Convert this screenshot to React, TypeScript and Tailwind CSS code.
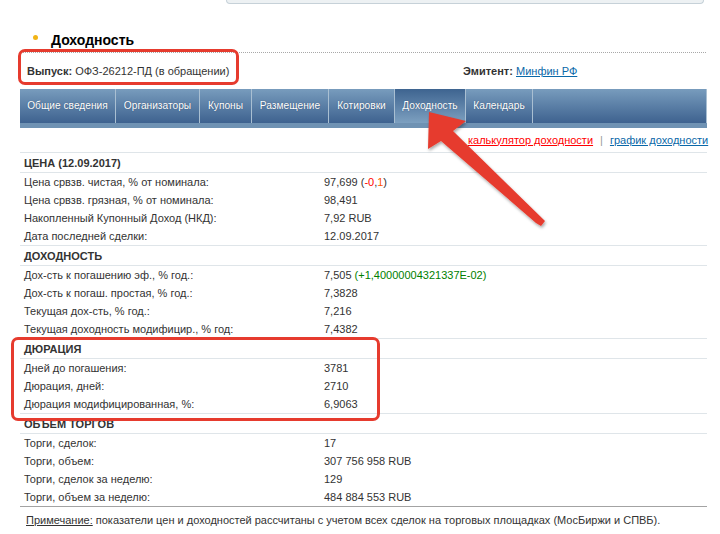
import React from "react";

const tabs: { label: string; w: string; active?: boolean }[] = [
  { label: "Общие сведения", w: "w-[96px]" },
  { label: "Организаторы", w: "w-[84px]" },
  { label: "Купоны", w: "w-[52px]" },
  { label: "Размещение", w: "w-[77px]" },
  { label: "Котировки", w: "w-[66px]" },
  { label: "Доходность", w: "w-[71px]", active: true },
  { label: "Календарь", w: "w-[67px]" },
];

type Row = [string, React.ReactNode];

const sections: { title: string; rows: Row[] }[] = [
  {
    title: "ЦЕНА (12.09.2017)",
    rows: [
      [
        "Цена срвзв. чистая, % от номинала:",
        <>
          97,699 (<span className="text-[#ff0000]">-0</span>,
          <span className="text-[#ff5500]">1</span>)
        </>,
      ],
      ["Цена срвзв. грязная, % от номинала:", "98,491"],
      ["Накопленный Купонный Доход (НКД):", "7,92 RUB"],
      ["Дата последней сделки:", "12.09.2017"],
    ],
  },
  {
    title: "ДОХОДНОСТЬ",
    rows: [
      [
        "Дох-сть к погашению эф., % год.:",
        <>
          7,505 <span className="text-[#008000]">(+1,40000004321337E-02)</span>
        </>,
      ],
      ["Дох-сть к погаш. простая, % год.:", "7,3828"],
      ["Текущая дох-сть, % год.:", "7,216"],
      ["Текущая доходность модифицир., % год:", "7,4382"],
    ],
  },
  {
    title: "ДЮРАЦИЯ",
    rows: [
      ["Дней до погашения:", "3781"],
      ["Дюрация, дней:", "2710"],
      ["Дюрация модифицированная, %:", "6,9063"],
    ],
  },
  {
    title: "ОБЪЕМ ТОРГОВ",
    rows: [
      ["Торги, сделок:", "17"],
      ["Торги, объем:", "307 756 958 RUB"],
      ["Торги, сделок за неделю:", "129"],
      ["Торги, объем за неделю:", "484 884 553 RUB"],
    ],
  },
];

export default function App() {
  return (
    <div
      className="relative w-[720px] h-[534px] overflow-hidden bg-white text-[#333] text-[11px]"
      style={{ fontFamily: '"Liberation Sans", Arial, sans-serif' }}
    >
      {/* top box remnant */}
      <div className="h-[4px] ml-[226px] w-[478px] border border-t-0 border-[#c6d1d8] bg-[#edf1f3] rounded-b-[4px]" />

      {/* title */}
      <div className="mt-[27px] ml-[33px] flex items-center h-[18px]">
        <span className="w-[5px] h-[5px] rounded-full bg-[#f2b416] mb-[6px]" />
        <span className="ml-[13px] text-[14px] font-bold text-black leading-[18px]">Доходность</span>
      </div>
      <div className="mt-[3px] ml-[20px] w-[686px] border-t border-dotted border-[#a8a8a8]" />

      {/* issue row */}
      <div className="mt-[9px] h-[18px] flex items-center whitespace-nowrap">
        <div className="ml-[27px] w-[436px]">
          <b>Выпуск:</b> ОФЗ-26212-ПД (в обращении)
        </div>
        <div>
          <b>Эмитент:</b> <span className="text-[#0a68a8] underline">Минфин РФ</span>
        </div>
      </div>

      {/* tabs */}
      <div className="mt-[9px] ml-[20px] w-[687px]">
        <div className="flex h-[34px] bg-gradient-to-b from-[#789cbd] to-[#3e628f]">
          {tabs.map((t) => (
            <div
              key={t.label}
              className={`${t.w} shrink-0 flex items-center justify-center border-r border-[#a9bfd2] text-white text-[10.2px] whitespace-nowrap ${
                t.active ? "bg-gradient-to-b from-[#3e6490] to-[#7da0c0]" : ""
              }`}
              style={{ textShadow: "0 0 1px rgba(30,50,80,0.7)" }}
            >
              {t.label}
            </div>
          ))}
          <div className="flex-1 border-r border-[#a9bfd2]" />
        </div>
        <div className="h-[5px] bg-[#6f92b3]" />
      </div>

      {/* links */}
      <div className="h-[24px] flex items-center ml-[468px] whitespace-nowrap">
        <span className="text-[#ff0000] underline">калькулятор доходности</span>
        <span className="mx-[7px] text-[#999]">|</span>
        <span className="text-[#0a68a8] underline">график доходности</span>
      </div>

      {/* table */}
      <div className="ml-[20px] w-[687px] border-b border-[#a3a3a3]">
        {sections.map((s) => (
          <div key={s.title} className="border-t border-[#dfe5e9]">
            <div className="h-[20px] pt-[1px] flex items-center pl-[4px] font-bold border-b border-[#dfe5e9]">
              {s.title}
            </div>
            {s.rows.map(([l, v], i) => (
              <div key={i} className="h-[18px] pt-[1px] flex items-center whitespace-nowrap">
                <div className="w-[304px] pl-[4px]">{l}</div>
                <div>{v}</div>
              </div>
            ))}
          </div>
        ))}
      </div>

      {/* note */}
      <div className="mt-[4px] h-[18px] flex items-center ml-[26px] whitespace-nowrap">
        <span className="underline">Примечание:</span>
        <span>&nbsp;показатели цен и доходностей рассчитаны с учетом всех сделок на торговых площадках (МосБиржи и СПВБ).</span>
      </div>

      {/* annotations */}
      <div className="absolute left-[18px] top-[49px] w-[221px] h-[36px] border-[3px] border-[#e63b2e] rounded-[7px]" />
      <div className="absolute left-[11px] top-[337px] w-[369px] h-[84px] border-[3px] border-[#e63b2e] rounded-[7px]" />
      <svg className="absolute left-0 top-0" width="720" height="534" viewBox="0 0 720 534">
        <defs>
          <filter id="sh" x="-20%" y="-20%" width="140%" height="140%">
            <feDropShadow dx="1" dy="2" stdDeviation="1.5" floodColor="#000" floodOpacity="0.35" />
          </filter>
        </defs>
        <polygon
          points="429,112 466,121 453,131 545,221 541,226 536,223 441,141 428,149"
          fill="#e63b2e"
          filter="url(#sh)"
        />
      </svg>
    </div>
  );
}
